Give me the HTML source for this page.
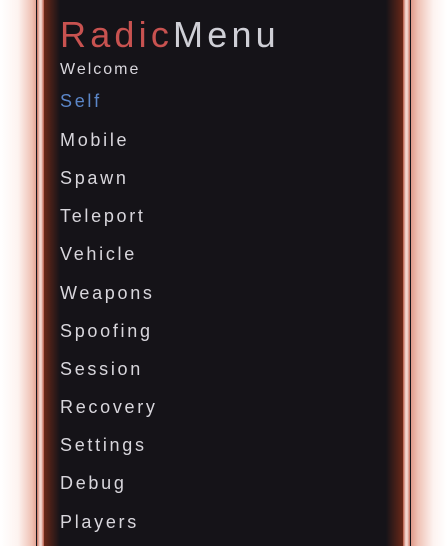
<!DOCTYPE html>
<html><head><style>
html,body{margin:0;padding:0;width:447px;height:546px;overflow:hidden;background:#fff;}
.glowL{position:absolute;left:0;top:0;width:40px;height:546px;background:linear-gradient(90deg,#fff 0%,#fdf3f0 45%,#efc1b4 80%,#d98a78 100%);}
.glowR{position:absolute;left:408px;top:0;width:39px;height:546px;background:linear-gradient(270deg,#fff 0%,#fdf3f0 35%,#efc1b4 75%,#d98a78 100%);}
.panel{position:absolute;left:36px;top:0;width:375px;height:546px;background:#151318;}
.stripeL{position:absolute;left:37px;top:0;width:7px;height:546px;background:linear-gradient(90deg,#c8705c,#f3d6cf 40%,#f3d6cf 60%,#b85a45);}
.stripeR{position:absolute;left:403px;top:0;width:7px;height:546px;background:linear-gradient(90deg,#b85a45,#f3d6cf 40%,#f3d6cf 60%,#c8705c);}
.innerL{position:absolute;left:44px;top:0;width:16px;height:546px;background:linear-gradient(90deg,#6a2818,#151318);}
.innerR{position:absolute;left:386px;top:0;width:17px;height:546px;background:linear-gradient(270deg,#6a2818,#151318);}
.t{position:absolute;left:60px;font-family:"Liberation Sans",sans-serif;color:#d8d6dc;font-size:18px;letter-spacing:2.7px;}
.title{position:absolute;left:60px;top:14px;font-family:"Liberation Sans",sans-serif;font-size:36px;letter-spacing:4.2px;}
</style></head><body>
<div class="glowL"></div><div class="glowR"></div>
<div class="panel"></div>
<div class="innerL"></div><div class="innerR"></div>
<div class="stripeL"></div><div class="stripeR"></div>
<div class="title"><span style="color:#c85250">Radic</span><span style="color:#cfcfd6">Menu</span></div>
<div class="t" style="top:61px;font-size:16px;letter-spacing:2px">Welcome</div>
<div class="t" style="top:91px;color:#5b86c8">Self</div>
<div class="t" style="top:130px">Mobile</div>
<div class="t" style="top:168px">Spawn</div>
<div class="t" style="top:206px">Teleport</div>
<div class="t" style="top:244px">Vehicle</div>
<div class="t" style="top:283px">Weapons</div>
<div class="t" style="top:321px">Spoofing</div>
<div class="t" style="top:359px">Session</div>
<div class="t" style="top:397px">Recovery</div>
<div class="t" style="top:435px">Settings</div>
<div class="t" style="top:473px">Debug</div>
<div class="t" style="top:512px">Players</div>
</body></html>
